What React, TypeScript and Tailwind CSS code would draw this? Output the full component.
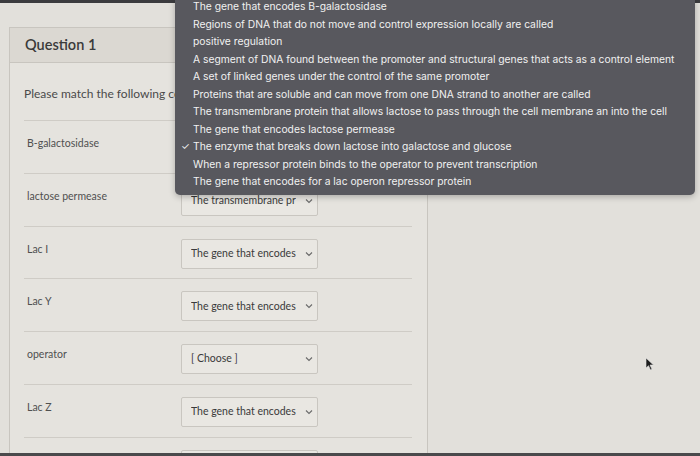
import React from "react";

const options = [
    "The gene that encodes B-galactosidase",
    "Regions of DNA that do not move and control expression locally are called",
    "positive regulation",
    "A segment of DNA found between the promoter and structural genes that acts as a control element",
    "A set of linked genes under the control of the same promoter",
    "Proteins that are soluble and can move from one DNA strand to another are called",
    "The transmembrane protein that allows lactose to pass through the cell membrane an into the cell",
    "The gene that encodes lactose permease",
    "The enzyme that breaks down lactose into galactose and glucose",
    "When a repressor protein binds to the operator to prevent transcription",
    "The gene that encodes for a lac operon repressor protein",
];

const rows = [
    { term: "B-galactosidase", value: "" },
    { term: "lactose permease", value: "The transmembrane pr" },
    { term: "Lac I", value: "The gene that encodes" },
    { term: "Lac Y", value: "The gene that encodes" },
    { term: "operator", value: "[ Choose ]" },
    { term: "Lac Z", value: "The gene that encodes" },
    { term: "", value: "" },
];

export default function App() {
    return (
        <div className="relative w-[700px] h-[456px] overflow-hidden bg-[#e2e0db] font-['Lato',sans-serif]">
            <div className="h-[3px] bg-[#3b3b3e]" />
            <div className="flex">
                <div className="w-[9px] shrink-0" />
                <QuizCard />
                <div className="flex-1" />
            </div>
            <Cursor />
            <OptionList />
            <div className="absolute bottom-0 left-0 right-0 h-[3px] bg-[#4a4a4c]" />
        </div>
    );
}

function QuizCard() {
    return (
        <div className="mt-[24px] w-[419px] h-[440px] border-l border-r border-t border-[#c8c5bf] bg-[#e5e3de]">
            <div className="h-[35px] flex items-center pl-[15px] bg-[#dbd8d2] border-b border-[#c8c5bf]">
                <h2 className="text-[14.5px] font-semibold text-[#3a3a3a] -mt-[1px]">Question 1</h2>
            </div>
            <div className="pl-[14px] pr-[15px]">
                <p className="w-[151px] overflow-hidden pt-[22px] pb-[17px] text-[12px] text-[#4a4a4a] whitespace-nowrap">
                    Please match the following concepts
                </p>
                {rows.map((r, i) => (
                    <MatchRow key={i} term={r.term} value={r.value} />
                ))}
            </div>
        </div>
    );
}

function MatchRow({ term, value }: { term: string; value: string }) {
    return (
        <div className="h-[52.8px] flex border-t border-[#cfccc6]">
            <div className="w-[157px] pl-[3px] pt-[15px] text-[10.5px] text-[#505050]">{term}</div>
            <div className="pt-[12px]">
                <div className="w-[137px] h-[30px] flex items-center justify-between pl-[9px] pr-[4px] border border-[#c9c6c0] rounded-[2px] bg-[#e9e7e2]">
                    <span className="text-[10.5px] text-[#3a3a3a] whitespace-nowrap overflow-hidden">{value}</span>
                    <svg width="8" height="6" viewBox="0 0 8 6" className="shrink-0">
                        <path d="M1 1.5 L4 4.5 L7 1.5" fill="none" stroke="#6b6b6b" strokeWidth="1.1" />
                    </svg>
                </div>
            </div>
        </div>
    );
}

function OptionList() {
    return (
        <div className="absolute left-[175px] top-[-2px] w-[520px] h-[197px] rounded-b-[5px] bg-[#58585e] shadow-[0_2px_6px_rgba(0,0,0,0.25)] font-['Inter',sans-serif]">
            <ul>
                {options.map((o, i) => (
                    <li key={o} className="h-[17.5px] flex items-center text-[10.3px] text-[#f1f1f1] whitespace-nowrap">
                        <span className="w-[18px] pl-[6px] text-[10px]">{i === 8 ? "✓" : ""}</span>
                        {o}
                    </li>
                ))}
            </ul>
        </div>
    );
}

function Cursor() {
    return (
        <svg className="absolute left-[645px] top-[357px]" width="10" height="14" viewBox="0 0 10 14">
            <path d="M1 1 L1 11 L3.5 8.7 L5.5 13 L7 12.3 L5 8 L8.5 8 Z" fill="#1d1d1d" stroke="#e5e5e5" strokeWidth="0.6" />
        </svg>
    );
}
